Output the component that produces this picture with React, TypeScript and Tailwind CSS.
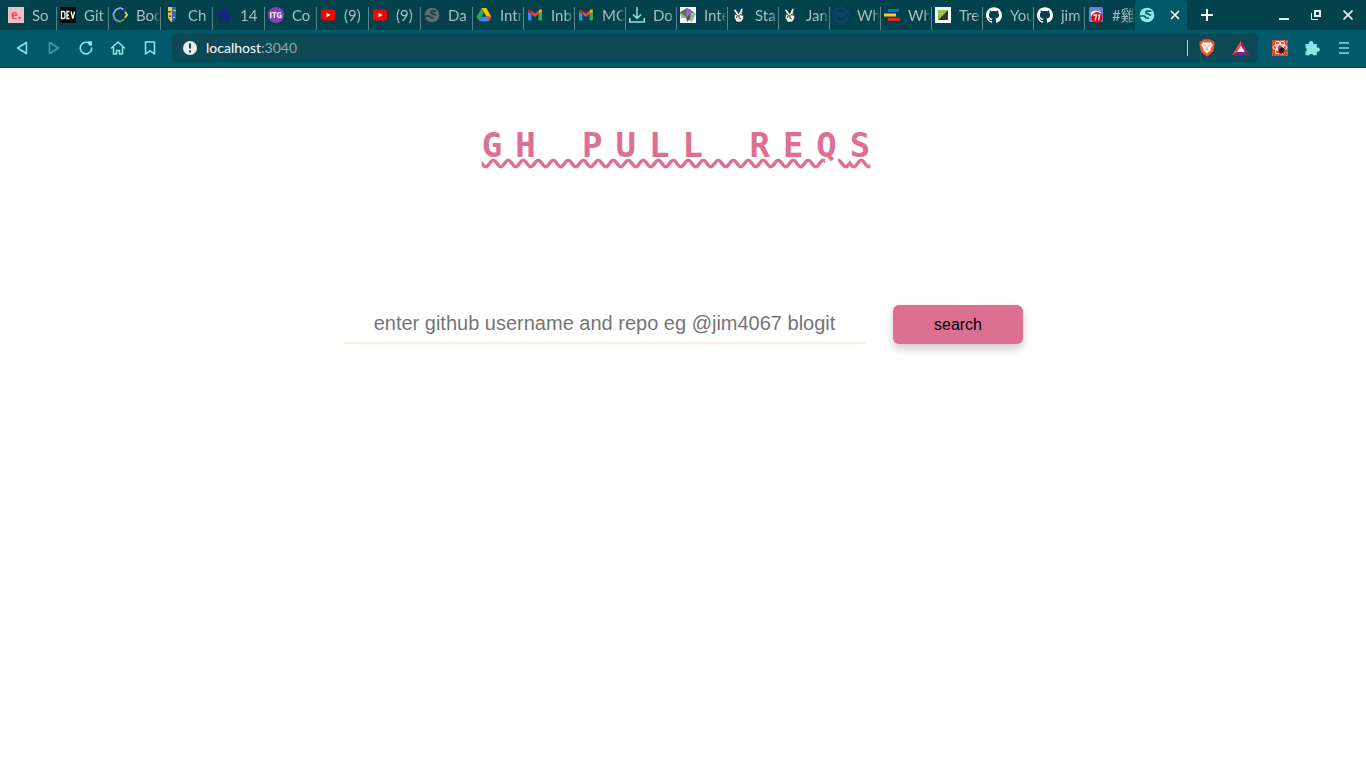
import React, { type ReactNode } from "react";
import { SiGithub, SiReact } from "react-icons/si";

const Globe = ({ color, sea }: { color: string; sea: string }) => (
  <svg viewBox="0 0 16 16" className="size-4 shrink-0" aria-hidden="true">
    <circle cx="8" cy="8" r="7.300" fill={color} />
    <path
      d="M1.500 9h3.300c1.500 0 1.500 2 3 2h1.500M11.500 4.200H8.200c-1.800 0-1.800 2.300 0 2.300 1.400 0 1.400 1.500 3.300 1.500"
      fill="none"
      stroke={sea}
      strokeWidth="1.700"
      strokeLinecap="round"
    />
  </svg>
);

const LetterE = () => (
  <svg viewBox="0 0 16 16" className="size-4 shrink-0" aria-hidden="true">
    <path d="M0 0h16v16H0z" fill="#efbfc6" />
    <text x="3" y="12" fontFamily="Liberation Serif, serif" fontWeight="700" fontSize="15" fill="#ef4a55">e.</text>
  </svg>
);

const Dev = () => (
  <svg viewBox="0 0 16 16" className="size-4 shrink-0" aria-hidden="true">
    <path d="M0 0h16v16H0z" fill="#080808" />
    <path d="M1.500 4.500v7h1.500c1.300 0 2-.8 2-2v-3c0-1.200-.7-2-2-2zM9.500 4.500H7v7h2.500M7 8h2M11 4.500l1.800 7 1.800-7" fill="none" stroke="#fff" strokeWidth="1.300" />
  </svg>
);

const Ring = () => (
  <svg viewBox="0 0 16 16" className="size-4 shrink-0" fill="none" strokeWidth="1.800" aria-hidden="true">
    <path d="M11.500 2.200 8 1 3.500 3 1.200 7.500" stroke="#8ca6d9" />
    <path d="M1.200 7.500 3 12.500l5 2.300" stroke="#7f9cc0" />
    <path d="m8 14.800 4.500-2.500" stroke="#63a64d" />
    <path d="m12.500 12.300 1.200-2.500M11.500 2.200l2.200 3" stroke="#214e9c" />
    <path d="m13.200 5 1.800 2.800-2 3" stroke="#f6d43c" />
  </svg>
);

const Shield = () => (
  <svg viewBox="0 0 16 16" className="size-4 shrink-0" aria-hidden="true">
    <path d="M4 0h4v15.500C5.500 13.500 4 12 4 9z" fill="#f4c343" />
    <path d="M8 0h4v9c0 3-1.500 4.500-4 6.500z" fill="#3467b1" />
    <path d="M4 4h3v1.500H4zM5 8.500h2v1.500H5z" fill="#234c77" />
    <path d="M9 3h3v1H9zM9 10h2v1H9z" fill="#f4c343" />
  </svg>
);

const Itg = () => (
  <svg viewBox="0 0 16 16" className="size-4 shrink-0" aria-hidden="true">
    <circle cx="8" cy="8" r="8" fill="#8b3fb5" />
    <path d="M2.800 5v6M4.300 5.600h4.200M6.400 5.600V11M13 6.300c-1.300-1.300-3.600-.7-3.600 1.700s2.200 3.100 3.700 1.900V8.300h-1.600" fill="none" stroke="#fff" strokeWidth="1.300" />
  </svg>
);

const YouTube = () => (
  <svg viewBox="0 0 16 16" className="size-4 shrink-0" aria-hidden="true">
    <rect x="1" y="2.500" width="14" height="11" rx="2.500" fill="#f00" />
    <path d="m6.500 5.700 4 2.300-4 2.300z" fill="#fff" />
  </svg>
);

const Drive = () => (
  <svg viewBox="0 0 16 16" className="size-4 shrink-0" aria-hidden="true">
    <path d="M5.600 1 .6 9.800l2.600 4.400L8 5.500z" fill="#2da94f" />
    <path d="M5.600 1h4.800l5 8.800h-5z" fill="#ffba00" />
    <path d="M5.800 9.800h9.600l-2.600 4.400H3.200z" fill="#4285f4" />
    <path d="M10.400 9.800h5l-2.600 4.400z" fill="#ea4335" />
  </svg>
);

const Gmail = () => (
  <svg viewBox="0 0 16 16" className="size-4 shrink-0" aria-hidden="true">
    <path d="M1 4.500 4.500 7v6.500H2a1 1 0 0 1-1-1z" fill="#4285f4" />
    <path d="M15 4.500 11.500 7v6.500H14a1 1 0 0 0 1-1z" fill="#34a853" />
    <path d="M15 4.500V4c0-1.500-1.500-1.800-2.300-1.200l-1.200 1V7z" fill="#fbbc04" />
    <path d="M1 4.500V4c0-1.500 1.500-1.800 2.300-1.200l1.200 1V7z" fill="#c5221f" />
    <path d="M4.500 3.800 8 6.500l3.500-2.700V7.200L8 10 4.500 7.200z" fill="#ea4335" />
  </svg>
);

const Download = () => (
  <svg viewBox="0 0 16 16" className="size-4 shrink-0" fill="none" stroke="#8ee5e8" strokeWidth="1.500" aria-hidden="true">
    <path d="M8 0v11M4 7.500 8 11.500l4-4M.8 11v4h14.400v-4" />
  </svg>
);

const Mosaic = () => (
  <svg viewBox="0 0 16 16" className="size-4 shrink-0" aria-hidden="true">
    <path d="M0 0h16v16H0z" fill="#fff" />
    <path d="m0 5 7-4 4 2-6 8-4-1z" fill="#5e6b57" />
    <path d="m6 1 5 2 5 4-5-1-5 4z" fill="#8f68b8" />
    <path d="m1 6 5 4-5 1zM11 6l5 1-4 8-5-3z" fill="#8bc48f" />
    <path d="m6 10 5-4-1 6-3 3z" fill="#5c5470" />
  </svg>
);

const Peace = () => (
  <svg viewBox="0 0 16 16" className="size-4 shrink-0" aria-hidden="true">
    <path d="m2.500 3 2-1 3.200 4.700 2.500-5.500 2 .7-1.400 5.400 2 1.200-.5 3.200-2 3.300H5.500L3.300 10.500l.2-2.700L5 7z" fill="#f6f3e9" stroke="#172a2e" strokeWidth=".6" />
    <path d="m5 7 2 2.500 2-2 2.800 1M6 9l-.5 2M8 8.500v2.500l2 1" fill="none" stroke="#222" strokeWidth=".8" />
  </svg>
);

const Pm = () => (
  <svg viewBox="0 0 16 16" className="size-4 shrink-0" fill="none" stroke="#213f91" strokeWidth="1.100" aria-hidden="true">
    <circle cx="8" cy="8" r="7.300" />
    <path d="M4 10.500v-5h1.500c2 0 2 2.800 0 2.800H4M8.500 10.500v-5l2 3 2-3v5" />
  </svg>
);

const Bars = () => (
  <svg viewBox="0 0 16 16" className="size-4 shrink-0" aria-hidden="true">
    <path d="M4 2h11v3H4z" fill="#146cbe" />
    <path d="M0 6.500h12v3H0z" fill="#ffc931" />
    <path d="M4 11h12v3H4z" fill="#d9291b" />
  </svg>
);

const Split = () => (
  <svg viewBox="0 0 16 16" className="size-4 shrink-0" aria-hidden="true">
    <path d="M0 0h16v16H0z" fill="#fff" />
    <path d="M3 3h10L3 13z" fill="#91c84a" />
    <path d="M13 3v10H3z" fill="#303735" />
  </svg>
);

const Discord = () => (
  <svg viewBox="0 0 16 16" className="size-4 shrink-0" aria-hidden="true">
    <rect x="1" width="14" height="15" rx="1.500" fill="#6d80d5" />
    <path d="M3 5.500c2-2.500 8-2.500 10 0v4H3z" fill="#fff" />
    <circle cx="9" cy="10.500" r="5.500" fill="#e00b18" />
    <path d="M5.500 8h3l-1.500 5.500M10 8.500l1.500-.5-1 5.500" fill="none" stroke="#fff" strokeWidth="1.300" />
  </svg>
);

const Atom = () => <SiReact className="size-4 shrink-0 text-[#360c9e]" />;
const Hub = () => <SiGithub className="size-4 shrink-0 text-white" />;

type Tab = { icon: ReactNode; label: string };

const olderTabs: Tab[] = [
  { icon: <LetterE />, label: "So" },
  { icon: <Dev />, label: "Git" },
  { icon: <Ring />, label: "Boo" },
  { icon: <Shield />, label: "Ch" },
  { icon: <Atom />, label: "14" },
  { icon: <Itg />, label: "Co" },
  { icon: <YouTube />, label: "(9)" },
  { icon: <YouTube />, label: "(9)" },
  { icon: <Globe color="#656a6d" sea="#02424d" />, label: "Da" },
];

const recentTabs: Tab[] = [
  { icon: <Drive />, label: "Intr" },
  { icon: <Gmail />, label: "Inb" },
  { icon: <Gmail />, label: "MC" },
  { icon: <Download />, label: "Do" },
  { icon: <Mosaic />, label: "Inte" },
  { icon: <Peace />, label: "Sta" },
  { icon: <Peace />, label: "Jan" },
  { icon: <Pm />, label: "Wh" },
  { icon: <Bars />, label: "Wh" },
  { icon: <Split />, label: "Tre" },
  { icon: <Hub />, label: "You" },
  { icon: <Hub />, label: "jim" },
];

function TabButton({ tab, width, divider = true }: { tab: Tab; width: string; divider?: boolean }) {
  return (
    <button type="button" className={`flex items-center pl-[3px] text-[#a5bdc3] ${width}`}>
      {tab.icon}
      <span className="ml-2 min-w-0 flex-1 overflow-hidden text-left whitespace-nowrap mask-r-from-70% mask-r-to-100%">{tab.label}</span>
      {divider && <span className="h-[23px] w-px self-end bg-[#5d8289]" />}
    </button>
  );
}

function TabStrip() {
  return (
    <header className="flex h-[30px] items-stretch bg-[#02424d] pl-[5px]">
      <nav aria-label="Open tabs" className="flex">
        {olderTabs.map((tab, i) => (
          <TabButton key={i} tab={tab} width="w-[52px]" />
        ))}
        {recentTabs.map((tab, i) => (
          <TabButton key={i} tab={tab} width="w-[51px]" />
        ))}
        <TabButton tab={{ icon: <Discord />, label: "#雞" }} width="w-[50px]" divider={false} />
        <div className="flex w-[52px] items-center justify-between rounded-t bg-[#025969] pr-[7px] pl-1">
          <Globe color="#8ee5e8" sea="#025969" />
          <button type="button" aria-label="Close tab">
            <svg viewBox="0 0 10 10" className="size-2.5" stroke="#fff" strokeWidth="1.600" aria-hidden="true">
              <path d="m1 1 8 8M9 1 1 9" />
            </svg>
          </button>
        </div>
      </nav>
      <button type="button" aria-label="New tab" className="ml-3.5 flex items-center">
        <svg viewBox="0 0 12 12" className="size-3" stroke="#fff" strokeWidth="2" aria-hidden="true">
          <path d="M6 0v12M0 6h12" />
        </svg>
      </button>
      <div className="ml-auto flex items-center gap-[22px] pr-[13px]">
        <button type="button" aria-label="Minimize">
          <svg viewBox="0 0 10 10" className="size-2.5" aria-hidden="true"><path d="M0 8h10v2H0z" fill="#e5eff1" /></svg>
        </button>
        <button type="button" aria-label="Restore">
          <svg viewBox="0 0 10 10" className="size-2.5" fill="none" stroke="#e5eff1" aria-hidden="true">
            <path d="M4 1h5v5H4z" strokeWidth="2" />
            <path d="M.5 3v6.500H7" />
          </svg>
        </button>
        <button type="button" aria-label="Close window">
          <svg viewBox="0 0 10 10" className="size-2.5" stroke="#e5eff1" strokeWidth="1.700" aria-hidden="true">
            <path d="m.5.5 9 9M9.500.5l-9 9" />
          </svg>
        </button>
      </div>
    </header>
  );
}

function Toolbar() {
  return (
    <div className="flex h-[38px] items-center border-b border-[#033f4a] bg-[#025969] px-3.5 pb-px">
      <div className="flex items-center gap-4 text-[#8ee5e8]">
        <button type="button" aria-label="Back">
          <svg viewBox="0 0 16 16" className="size-4" fill="none" stroke="currentColor" strokeWidth="1.500" strokeLinejoin="round" aria-hidden="true"><path d="M12.500 2.500v11L3.500 8z" /></svg>
        </button>
        <button type="button" aria-label="Forward" className="opacity-50">
          <svg viewBox="0 0 16 16" className="size-4" fill="none" stroke="currentColor" strokeWidth="1.500" strokeLinejoin="round" aria-hidden="true"><path d="M3.500 2.500v11l9-5.500z" /></svg>
        </button>
        <button type="button" aria-label="Reload">
          <svg viewBox="0 0 16 16" className="size-4" aria-hidden="true">
            <path d="M10.500 2.800A5.800 5.800 0 1 0 13.800 8" fill="none" stroke="currentColor" strokeWidth="1.600" strokeLinecap="round" />
            <path d="M9.500 1.200H14v4.600H11z" fill="currentColor" />
          </svg>
        </button>
        <button type="button" aria-label="Home">
          <svg viewBox="0 0 16 16" className="size-4" fill="none" stroke="currentColor" strokeWidth="1.500" strokeLinejoin="round" strokeLinecap="round" aria-hidden="true"><path d="M1.500 8 8 2l6.500 6M3.500 7v7h3v-3.500h3V14h3V7" /></svg>
        </button>
        <button type="button" aria-label="Bookmark this page">
          <svg viewBox="0 0 16 16" className="size-4" fill="none" stroke="currentColor" strokeWidth="1.500" strokeLinejoin="round" aria-hidden="true"><path d="M3.500 2h9v12L8 10.800 3.500 14z" /></svg>
        </button>
      </div>
      <div className="ml-3.5 flex h-7 min-w-0 flex-1 items-center rounded bg-[#0d4955] pr-2 pl-2.5">
        <svg viewBox="0 0 16 16" className="size-4" aria-hidden="true">
          <circle cx="8" cy="8" r="7" fill="#ececec" />
          <path d="M7 3.500h2v5H7zM7 10.500h2v2H7z" fill="#0d4955" />
        </svg>
        <a href="#" className="ml-2 text-sm text-[#93a9af]"><span className="text-white">localhost</span>:3040</a>
        <span className="ml-auto h-4 w-px bg-[#c2ced0]" />
        <button type="button" aria-label="Shields" className="ml-[11px]">
          <svg viewBox="0 0 16 18" className="h-[18px] w-4" aria-hidden="true">
            <path d="M4.500.3h7L13 2l1.800.2.900 2.800-1.600 7.400L8 17.700l-6.100-5.300L.3 5l.9-2.800L3 2z" fill="#fb542b" />
            <path d="m4.200 3.200 1.800.3h4l1.800-.3 2 2.800-2.300 3.700.3 1.600-1.700 1.200L8 14.500l-2.100-2-1.700-1.200.3-1.600L2.200 6z" fill="#fff" />
            <path d="m4.300 6.300 2.500.9M11.700 6.300l-2.500.9M6.400 11.200 8 10.400l1.600.8M8 7.500v2.500" fill="none" stroke="#fb542b" strokeWidth=".8" />
          </svg>
        </button>
        <button type="button" aria-label="Rewards" className="ml-[17px]">
          <svg viewBox="0 0 18 16" className="h-4 w-[18px]" aria-hidden="true">
            <path d="M9 .5 0 15.500l6-3.500 3-6z" fill="#ff4724" />
            <path d="M9 .5 18 15.500 12 12 9 6z" fill="#9e1f63" />
            <path d="M0 15.500h18L12 12H6z" fill="#662d91" />
            <path d="m9 5.500 3.800 6.500H5.200z" fill="#fff" />
          </svg>
        </button>
      </div>
      <div className="ml-3.5 flex items-center gap-4">
        <button type="button" aria-label="React developer tools">
          <svg viewBox="0 0 16 16" className="size-4" aria-hidden="true">
            <path d="M0 0h16v16H0z" fill="#d94a3b" />
            <g fill="none" stroke="#fff" strokeWidth="1">
              <ellipse cx="8" cy="7.500" rx="7" ry="2.800" />
              <ellipse cx="8" cy="7.500" rx="7" ry="2.800" transform="rotate(60 8 7.500)" />
              <ellipse cx="8" cy="7.500" rx="7" ry="2.800" transform="rotate(120 8 7.500)" />
            </g>
            <ellipse cx="9.500" cy="10.500" rx="2.600" ry="3.300" transform="rotate(40 9.500 10.500)" fill="#241c1b" />
            <path d="m6 9 7 3M8 13.500l2-6M11.500 14l1-5" stroke="#241c1b" strokeWidth=".8" />
          </svg>
        </button>
        <button type="button" aria-label="Extensions" className="text-[#8ee5e8]">
          <svg viewBox="0 0 16 16" className="size-4" aria-hidden="true">
            <path d="M1.500 4h3.700a2.200 2.200 0 1 1 4 0h3.600v3.600a2.200 2.200 0 1 1 0 4v3.600H9.300a2.200 2.200 0 0 0-4 0H1.500v-3.700a2.200 2.200 0 0 0 0-4z" fill="currentColor" />
          </svg>
        </button>
        <button type="button" aria-label="Menu">
          <svg viewBox="0 0 16 16" className="size-4" aria-hidden="true"><path d="M3 2h10v2H3zM3 7h10v2H3zM3 12h10v2H3z" fill="#5dbcc4" /></svg>
        </button>
      </div>
    </div>
  );
}

export default function App() {
  return (
    <div className="min-h-screen bg-white font-[Lato,'Noto_Sans_CJK_JP',sans-serif] text-[15px]">
      <TabStrip />
      <Toolbar />
      <main className="flex flex-col items-center pt-[53px]">
        <h1 className="pr-3.5 font-['DejaVu_Sans_Mono',monospace] text-[34px] leading-[48px] font-bold tracking-[13px] text-[#db7093]">
          <span className="underline decoration-wavy">
            GH PULL REQ<span className="tracking-normal">S</span>
          </span>
        </h1>
        <form className="mt-[136px] flex items-start gap-[27px] font-['Liberation_Sans',Arial,sans-serif]" onSubmit={(e) => e.preventDefault()}>
          <input
            aria-label="GitHub username and repo"
            placeholder="enter github username and repo eg @jim4067 blogit"
            className="h-[39px] w-[523px] border-b-2 border-[#ffefd5] text-center text-xl text-[#333] outline-none placeholder:text-[#757575]"
          />
          <button type="submit" className="h-[39px] w-[130px] rounded-md bg-[#db7093] text-base text-black shadow-[0_5px_10px_rgba(0,0,0,0.2)]">search</button>
        </form>
      </main>
    </div>
  );
}
